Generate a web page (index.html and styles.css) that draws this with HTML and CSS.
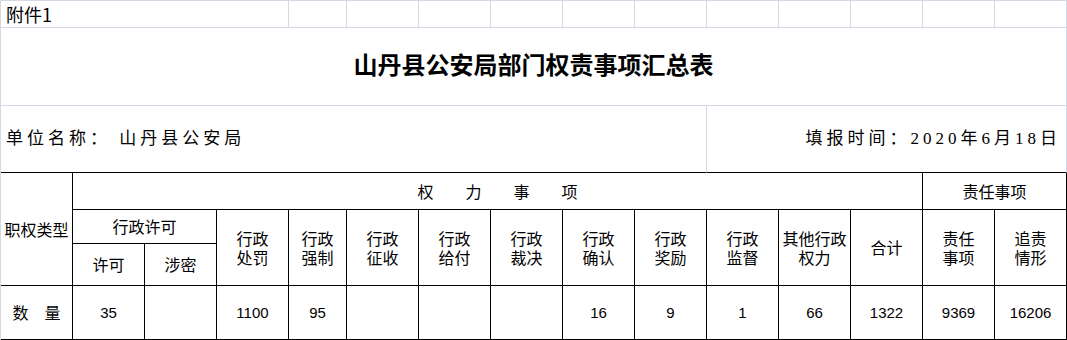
FILE: index.html
```html
<!DOCTYPE html>
<html lang="zh-CN">
<head>
<meta charset="utf-8">
<title>山丹县公安局部门权责事项汇总表</title>
<link rel="stylesheet" href="styles.css">
</head>
<body>
<div class="sheet">
  <div class="c g note">附件1</div>
  <div class="c g"></div><div class="c g"></div><div class="c g"></div><div class="c g"></div>
  <div class="c g"></div><div class="c g"></div><div class="c g"></div><div class="c g"></div>
  <div class="c g"></div><div class="c g"></div><div class="c g"></div>

  <div class="c g title">山丹县公安局部门权责事项汇总表</div>

  <div class="c g unit">单位名称： 山丹县公安局</div>
  <div class="c g date">填报时间： <span class="num">2020</span>年<span class="num">6</span>月<span class="num">18</span>日</div>

  <div class="c t kind">职权类型</div>
  <div class="c t power">权　　力　　事　　项</div>
  <div class="c t resp">责任事项</div>

  <div class="c t permit">行政许可</div>
  <div class="c t tall"><span class="ln">行政</span><span class="ln">处罚</span></div>
  <div class="c t tall"><span class="ln">行政</span><span class="ln">强制</span></div>
  <div class="c t tall"><span class="ln">行政</span><span class="ln">征收</span></div>
  <div class="c t tall"><span class="ln">行政</span><span class="ln">给付</span></div>
  <div class="c t tall"><span class="ln">行政</span><span class="ln">裁决</span></div>
  <div class="c t tall"><span class="ln">行政</span><span class="ln">确认</span></div>
  <div class="c t tall"><span class="ln">行政</span><span class="ln">奖励</span></div>
  <div class="c t tall"><span class="ln">行政</span><span class="ln">监督</span></div>
  <div class="c t tall"><span class="ln">其他行政</span><span class="ln">权力</span></div>
  <div class="c t tall">合计</div>
  <div class="c t tall"><span class="ln">责任</span><span class="ln">事项</span></div>
  <div class="c t tall"><span class="ln">追责</span><span class="ln">情形</span></div>

  <div class="c t sub sub-a">许可</div>
  <div class="c t sub sub-b">涉密</div>

  <div class="c t row7 label">数　量</div>
  <div class="c t row7 val">35</div>
  <div class="c t row7 val"></div>
  <div class="c t row7 val">1100</div>
  <div class="c t row7 val">95</div>
  <div class="c t row7 val"></div>
  <div class="c t row7 val"></div>
  <div class="c t row7 val"></div>
  <div class="c t row7 val">16</div>
  <div class="c t row7 val">9</div>
  <div class="c t row7 val">1</div>
  <div class="c t row7 val">66</div>
  <div class="c t row7 val">1322</div>
  <div class="c t row7 val">9369</div>
  <div class="c t row7 val">16206</div>
</div>
</body>
</html>
```

FILE: styles.css
```css
html, body {
  margin: 0;
  padding: 0;
  background: #ffffff;
}

body {
  font-family: "Noto Sans CJK SC", "Noto Sans", sans-serif;
  color: #000000;
}

.sheet {
  width: 1066px;
  display: grid;
  grid-template-columns: 72px 72px 72px 72px 58px repeat(10, 72px);
  grid-template-rows: 27px 78px 67px 37px 34px 42px 54px;
  border-top: 1px solid #d3d9e4;
  border-left: 1px solid #d3d9e4;
}

.c {
  box-sizing: border-box;
  display: flex;
  align-items: center;
  justify-content: center;
  text-align: center;
  font-size: 16px;
  line-height: 19px;
  white-space: nowrap;
}

.g {
  border-right: 1px solid #d3d9e4;
  border-bottom: 1px solid #d3d9e4;
}

.t {
  border-right: 1px solid #000000;
  border-bottom: 1px solid #000000;
}

.tall {
  flex-direction: column;
}

.ln {
  display: block;
  height: 19px;
  line-height: 19px;
}

.note {
  grid-column: 1 / 5;
  justify-content: flex-start;
  padding-left: 5px;
  font-size: 18px;
}

.title {
  grid-column: 1 / 16;
  font-size: 24px;
  font-weight: bold;
  padding-bottom: 6px;
}

.unit,
.date {
  grid-row: 3;
  font-size: 17px;
  letter-spacing: 4px;
  font-family: "Liberation Serif", "Noto Sans CJK SC", serif;
  border-bottom-color: #000000;
  padding-bottom: 2px;
}

.unit {
  grid-column: 1 / 11;
  justify-content: flex-start;
  padding-left: 5px;
}

.date {
  grid-column: 11 / 16;
  justify-content: flex-end;
  padding-right: 5px;
}

.kind {
  grid-column: 1;
  grid-row: 4 / 7;
}

.power {
  grid-row: 4;
  grid-column: 2 / 14;
}

.resp {
  grid-row: 4;
  grid-column: 14 / 16;
}

.permit {
  grid-row: 5;
  grid-column: 2 / 4;
}

.tall {
  grid-row: 5 / 7;
}

.sub {
  grid-row: 6;
}

.sub-a {
  grid-column: 2;
}

.sub-b {
  grid-column: 3;
}

.row7 {
  grid-row: 7;
}

.val {
  font-family: "Liberation Sans", sans-serif;
  font-size: 15px;
}

.label {
  grid-column: 1;
}
```
